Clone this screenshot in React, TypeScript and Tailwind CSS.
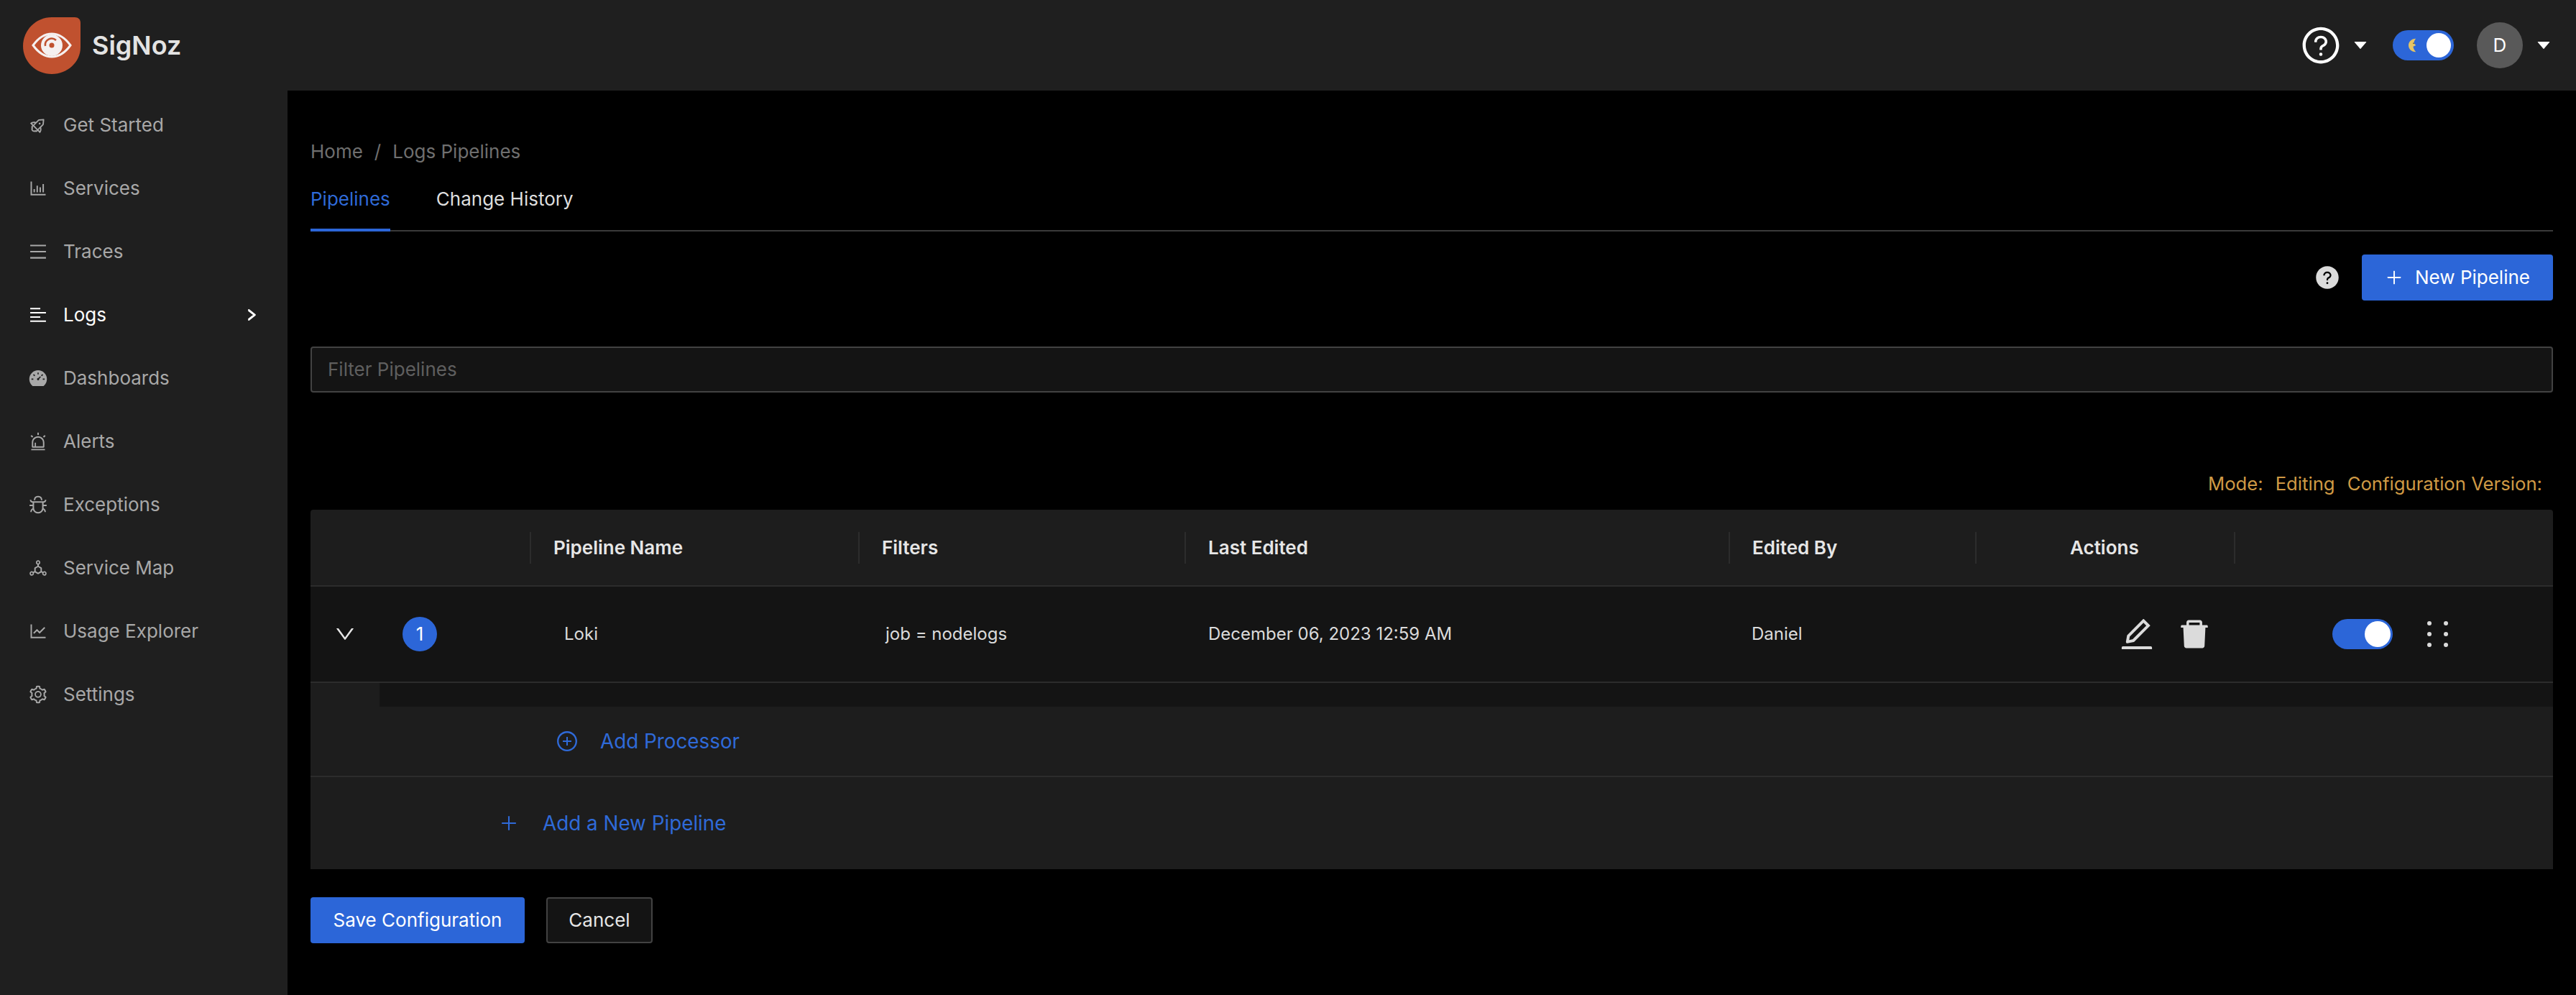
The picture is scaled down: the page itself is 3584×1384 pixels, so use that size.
import React from 'react';
import {
  AiOutlineRocket,
  AiOutlineBarChart,
  AiOutlineMenu,
  AiOutlineAlignLeft,
  AiFillDashboard,
  AiOutlineAlert,
  AiOutlineBug,
  AiOutlineDeploymentUnit,
  AiOutlineLineChart,
  AiOutlineSetting,
  AiOutlineRight,
  AiOutlineQuestionCircle,
  AiFillCaretDown,
  AiOutlineDown,
  AiOutlinePlus,
  AiOutlinePlusCircle,
  AiOutlineEdit,
  AiFillDelete,
  AiFillQuestionCircle,
} from 'react-icons/ai';

const navItems = [
  { label: 'Get Started', icon: AiOutlineRocket, rotate: true },
  { label: 'Services', icon: AiOutlineBarChart },
  { label: 'Traces', icon: AiOutlineMenu },
  { label: 'Logs', icon: AiOutlineAlignLeft, active: true },
  { label: 'Dashboards', icon: AiFillDashboard },
  { label: 'Alerts', icon: AiOutlineAlert },
  { label: 'Exceptions', icon: AiOutlineBug },
  { label: 'Service Map', icon: AiOutlineDeploymentUnit },
  { label: 'Usage Explorer', icon: AiOutlineLineChart },
  { label: 'Settings', icon: AiOutlineSetting },
];

const Logo = () => (
  <svg viewBox="0 0 80 79" className="w-[80px] h-[79px] shrink-0">
    <path d="M40 0H72C77 0 80 3 80 8V42C80 62 62 79 40 79C18 79 0 62 0 40C0 18 18 0 40 0Z" fill="#c0512f" />
    <path d="M14 39C22 28 31 23 40 23C49 23 58 28 66 39C58 50 49 55 40 55C31 55 22 50 14 39Z" fill="none" stroke="#f5f0f0" strokeWidth="3" />
    <circle cx="40" cy="39" r="15" fill="#f5f0f0" />
    <path d="M31 40A9 9 0 0 1 46 32" fill="none" stroke="#c0512f" strokeWidth="2.5" />
    <circle cx="40" cy="39" r="3.5" fill="#c0512f" />
  </svg>
);

const Moon = () => (
  <svg viewBox="0 0 14 20" className="w-[13px] h-[20px]">
    <path d="M11 0C4 0 0 5 0 10C0 15 4 20 11 20C8 17 7 13 7 12L11 10L8 7C8 5 9 2 11 0Z" fill="#e6c565" />
    <circle cx="7.5" cy="7" r="0.8" fill="#3a3010" />
  </svg>
);

const Holder = () => (
  <svg viewBox="0 0 29 36" className="w-[29px] h-[36px] text-[#dbdbdb]">
    {[3, 18, 33].map(y => (
      <g key={y} fill="currentColor">
        <circle cx="3" cy={y} r="3" />
        <circle cx="26" cy={y} r="3" />
      </g>
    ))}
  </svg>
);

const Toggle = () => (
  <div className="w-[84px] h-[42px] rounded-full bg-[#2c66d8] flex items-center justify-end pr-[3px]">
    <div className="w-[36px] h-[36px] rounded-full bg-white" />
  </div>
);

const gridCols = 'grid grid-cols-[305px_457px_454px_757px_343px_360px_444px]';

const HeaderCell = ({ label, center }: { label?: string; center?: boolean }) => (
  <div className="flex items-center h-full">
    <div className="w-[2px] h-[44px] bg-[#2c2c2c] shrink-0" />
    {label && (
      <span className={`font-semibold text-[#e6e6e6] ${center ? 'pl-[130px]' : 'pl-[31px]'}`}>{label}</span>
    )}
  </div>
);

export default function App() {
  return (
    <div className="w-[3584px] h-[1384px] overflow-hidden bg-black flex flex-col font-['Inter',sans-serif] text-[26px] leading-[40px] text-[#dbdbdb]">
      {/* Top bar */}
      <header className="h-[126px] shrink-0 bg-[#1f1f1f] flex items-center justify-between pl-[32px] pr-[33px]">
        <div className="flex items-center gap-[16px]">
          <Logo />
          <span className="text-[36px] font-semibold text-[#e3e3e3]">SigNoz</span>
        </div>
        <div className="flex items-center">
          <AiOutlineQuestionCircle className="w-[58px] h-[58px] text-white" />
          <AiFillCaretDown className="w-[24px] h-[24px] text-white ml-[14px]" />
          <div className="ml-[33px] w-[85px] h-[42px] rounded-full bg-[#2c66d8] flex items-center justify-between pl-[22px] pr-[4px]">
            <Moon />
            <div className="w-[34px] h-[34px] rounded-full bg-white" />
          </div>
          <div className="ml-[32px] w-[64px] h-[64px] rounded-full bg-[#595959] flex items-center justify-center text-white">D</div>
          <AiFillCaretDown className="w-[24px] h-[24px] text-white ml-[17px]" />
        </div>
      </header>

      <div className="flex flex-1 min-h-0">
        {/* Sidebar */}
        <aside className="w-[400px] shrink-0 bg-[#1f1f1f] pt-[4px]">
          {navItems.map(item => {
            const Icon = item.icon;
            return (
              <div
                key={item.label}
                className={`h-[88px] flex items-center pl-[39px] pr-[40px] ${item.active ? 'text-white' : 'text-[#a8a8a8]'}`}
              >
                <Icon className={`w-[28px] h-[28px] shrink-0 ${item.rotate ? 'rotate-45' : ''}`} />
                <span className="ml-[21px] flex-1">{item.label}</span>
                {item.active && <AiOutlineRight className="w-[20px] h-[20px]" stroke="currentColor" strokeWidth={70} />}
              </div>
            );
          })}
        </aside>

        {/* Main */}
        <main className="flex-1 min-w-0 px-[32px] pt-[65px]">
          <div className="flex items-center text-[#6f6f6f]">
            <span>Home</span>
            <span className="mx-[16px]">/</span>
            <span>Logs Pipelines</span>
          </div>

          <div className="flex h-[91px] border-b-2 border-[#3a3a3a]">
            <div className="h-[91px] pt-[26px] border-b-4 border-[#2c66d8] text-[#2f6ad8]">Pipelines</div>
            <div className="ml-[64px] pt-[26px] text-[#dedede]">Change History</div>
          </div>

          <div className="mt-[32px] flex items-center justify-end">
            <AiFillQuestionCircle className="w-[36px] h-[36px] text-[#dbdbdb] mr-[30px]" />
            <button className="h-[64px] w-[266px] rounded-[4px] bg-[#2c66d8] text-white flex items-center justify-center gap-[16px]">
              <AiOutlinePlus className="w-[26px] h-[26px]" />
              New Pipeline
            </button>
          </div>

          <div className="mt-[64px] h-[64px] rounded-[4px] border-2 border-[#424242] bg-[#141414] flex items-center px-[22px] text-[#5f5f5f]">
            Filter Pipelines
          </div>

          <div className="mt-[107px] mb-[16px] pr-[15px] flex justify-end gap-[17px] text-[25.7px] text-[#cf9a45]">
            <span>Mode:</span>
            <span>Editing</span>
            <span>Configuration Version:</span>
          </div>

          {/* Table */}
          <div className="bg-[#1d1d1d] rounded-t-[4px]">
            <div className={`${gridCols} h-[107px] border-b-2 border-[#2c2c2c] items-center`}>
              <div />
              <HeaderCell label="Pipeline Name" />
              <HeaderCell label="Filters" />
              <HeaderCell label="Last Edited" />
              <HeaderCell label="Edited By" />
              <HeaderCell label="Actions" center />
              <HeaderCell />
            </div>

            <div className={`${gridCols} h-[134px] bg-[#141414] border-b-2 border-[#2c2c2c] items-center text-[24px]`}>
              <div className="flex items-center pl-[32px]">
                <AiOutlineDown className="w-[32px] h-[32px] text-[#e6e6e6]" />
                <div className="ml-[64px] w-[48px] h-[48px] rounded-full bg-[#2c66d8] flex items-center justify-center text-[26px] text-white">1</div>
              </div>
              <div className="pl-[48px]">Loki</div>
              <div className="pl-[38px]">job = nodelogs</div>
              <div className="pl-[33px]">December 06, 2023 12:59 AM</div>
              <div className="pl-[32px]">Daniel</div>
              <div className="flex items-center pl-[198px] gap-[28px]">
                <AiOutlineEdit className="w-[54px] h-[54px] text-[#dbdbdb]" />
                <AiFillDelete className="w-[50px] h-[50px] text-[#dbdbdb]" />
              </div>
              <div className="flex items-center pl-[137px] gap-[48px]">
                <Toggle />
                <Holder />
              </div>
            </div>

            <div className="h-[33px] pl-[96px]">
              <div className="h-full bg-[#141414]" />
            </div>

            <div className="h-[98px] border-b-2 border-[#2c2c2c] flex items-center pl-[341px] text-[27.8px] text-[#2f6ad8]">
              <AiOutlinePlusCircle className="w-[32px] h-[32px]" />
              <span className="ml-[30px]">Add Processor</span>
            </div>

            <div className="h-[128px] flex items-center pl-[262px] text-[27.8px] text-[#2f6ad8]">
              <AiOutlinePlus className="w-[28px] h-[28px]" />
              <span className="ml-[33px]">Add a New Pipeline</span>
            </div>
          </div>

          <div className="mt-[39px] flex gap-[30px]">
            <button className="h-[64px] w-[298px] rounded-[4px] bg-[#2c66d8] text-white">Save Configuration</button>
            <button className="h-[64px] w-[148px] rounded-[4px] bg-[#141414] border-2 border-[#424242] text-[#e6e6e6]">Cancel</button>
          </div>
        </main>
      </div>
    </div>
  );
}
